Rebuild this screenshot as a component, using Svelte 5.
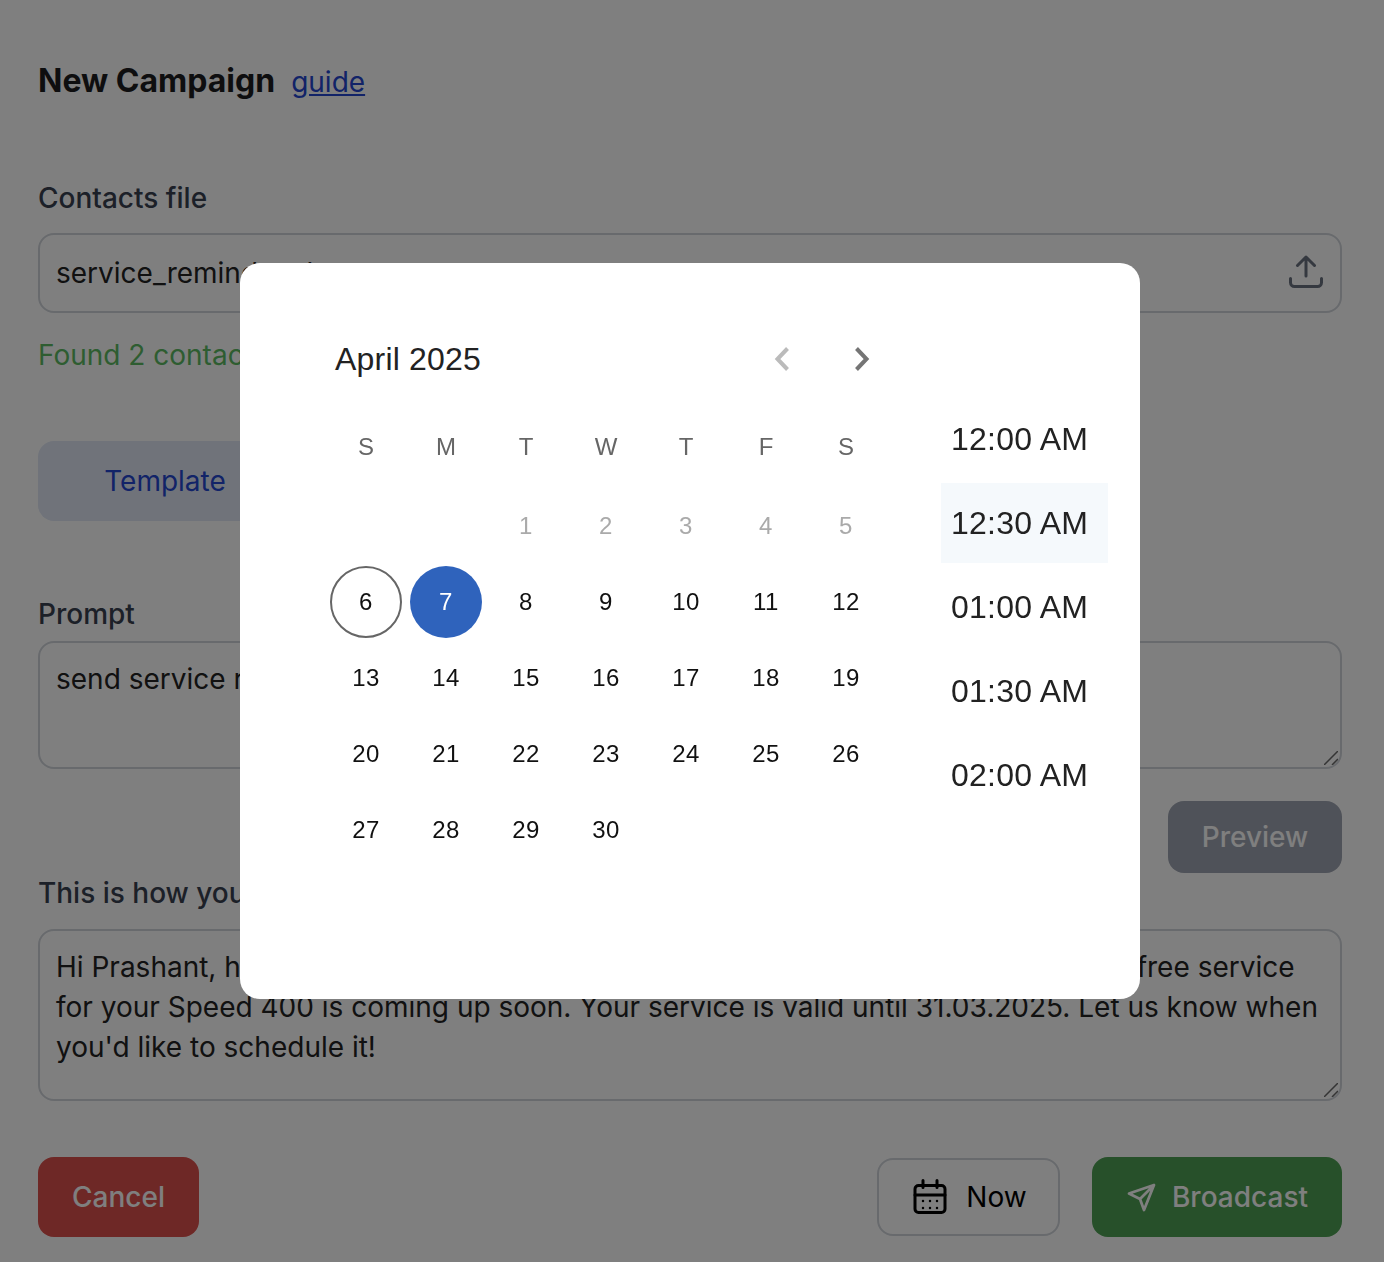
<script>
	const weekdays = ['S', 'M', 'T', 'W', 'T', 'F', 'S'];
	const blanks = [0, 1];
	const days = Array.from({ length: 30 }, (_, i) => i + 1);
	const times = ['12:00 AM', '12:30 AM', '01:00 AM', '01:30 AM', '02:00 AM'];
	const prompt = 'send service reminders to my customers';
	const preview =
		"Hi Prashant, hope you are doing well and enjoying your bike! Your complimentary free service for your Speed 400 is coming up soon. Your service is valid until 31.03.2025. Let us know when you'd like to schedule it!";
</script>

<div class="page">
	<header class="title-row">
		<h1>New Campaign</h1>
		<a href="#guide">guide</a>
	</header>

	<label class="label contacts-label" for="contacts">Contacts file</label>
	<div class="file-input" id="contacts">
		<span>service_reminder.xlsx</span>
		<svg width="36" height="36" viewBox="0 0 36 36" fill="none" stroke="#6b7280" stroke-width="3" stroke-linecap="round" stroke-linejoin="round">
			<path d="M18 21V2M9.500 10.500 18 2l8.500 8.500M2.500 23.500v4a4 4 0 0 0 4 4h23a4 4 0 0 0 4-4v-4" />
		</svg>
	</div>
	<p class="found">Found 2 contacts</p>

	<div class="tabs">
		<button class="tab">Template</button>
	</div>

	<label class="label prompt-label" for="prompt">Prompt</label>
	<div class="field">
		<textarea id="prompt" class="prompt" value={prompt}></textarea>
		<svg class="grip" width="14" height="14" viewBox="0 0 14 14" fill="none" stroke="#6a6a6a" stroke-width="1.500">
			<path d="M0 14 14 0M8 14l6-6" />
		</svg>
	</div>
	<div class="preview-row">
		<button class="btn preview-btn">Preview</button>
	</div>

	<label class="label message-label" for="message">This is how your message will look</label>
	<div class="field">
		<textarea id="message" class="message" value={preview}></textarea>
		<svg class="grip" width="14" height="14" viewBox="0 0 14 14" fill="none" stroke="#6a6a6a" stroke-width="1.500">
			<path d="M0 14 14 0M8 14l6-6" />
		</svg>
	</div>

	<footer class="actions">
		<button class="btn cancel">Cancel</button>
		<div class="actions-right">
			<button class="now">
				<svg width="36" height="36" viewBox="0 0 36 36" fill="none" stroke="#000" stroke-width="3" stroke-linecap="round" stroke-linejoin="round">
					<rect x="3" y="6.500" width="30" height="27" rx="3.500" />
					<path d="M3 16h30M11 1.500v7M25 1.500v7" />
					<path d="M11 22h.01M18 22h.01M25 22h.01M11 29h.01M18 29h.01M25 29h.01" stroke-width="2.500" />
				</svg>
				Now
			</button>
			<button class="btn broadcast">
				<svg width="30" height="30" viewBox="0 0 30 30" fill="none" stroke="#fff" stroke-width="2.750" stroke-linecap="round" stroke-linejoin="round">
					<path d="M28 3 3 11.500 14 17l4 11L28 3ZM14 17 28 3" />
				</svg>
				Broadcast
			</button>
		</div>
	</footer>
</div>

<div class="backdrop">
	<div class="modal">
		<div class="calendar">
			<div class="month-row">
				<span class="month">April 2025</span>
				<div class="arrows">
					<svg width="18" height="26" viewBox="0 0 18 26" fill="none" stroke="#bbb" stroke-width="4">
						<path d="M14.500 2.500 4.500 13l10 10.500" />
					</svg>
					<svg width="18" height="26" viewBox="0 0 18 26" fill="none" stroke="#757575" stroke-width="4">
						<path d="m3.500 2.500 10 10.500-10 10.500" />
					</svg>
				</div>
			</div>
			<div class="grid weekdays">
				{#each weekdays as day}
					<span>{day}</span>
				{/each}
			</div>
			<div class="grid days">
				{#each blanks as blank}
					<span class="day" data-blank={blank}></span>
				{/each}
				{#each days as day}
					<span class="day" class:past={day < 6} class:today={day === 6} class:selected={day === 7}>{day}</span>
				{/each}
			</div>
		</div>
		<ul class="times">
			{#each times as time, i}
				<li class:hover={i === 1}>{time}</li>
			{/each}
		</ul>
	</div>
</div>

<style>
	:global(body) {
		background: #fff;
		font-family: Inter, 'Liberation Sans', sans-serif;
		color: #111;
	}

	.page {
		box-sizing: border-box;
		height: 1262px;
		padding: 60px 42px 0 38px;
		overflow: hidden;
		font-size: 28px;
		line-height: 40px;
	}

	.title-row {
		display: flex;
		align-items: baseline;
		gap: 16px;
		height: 42px;
		margin-bottom: 76px;
	}

	h1 {
		margin: 0;
		font-size: 32px;
		font-weight: 700;
		line-height: 42px;
		color: #1c1c1e;
	}

	.title-row a {
		color: #2547d0;
	}

	.label {
		display: block;
		font-weight: 500;
		color: #394150;
		height: 36px;
		line-height: 40px;
	}

	.contacts-label {
		margin-bottom: 19px;
	}

	.file-input {
		box-sizing: border-box;
		display: flex;
		align-items: center;
		justify-content: space-between;
		height: 80px;
		padding: 0 16px;
		border: 2px solid #d1d5db;
		border-radius: 16px;
		color: #222;
	}

	.found {
		margin: 22px 0 0;
		color: #5dbb63;
	}

	.tabs {
		display: flex;
		margin-top: 66px;
	}

	.tab {
		width: 254px;
		height: 80px;
		padding: 0;
		border: 0;
		border-radius: 16px 0 0 16px;
		background: #e0e7f5;
		font: inherit;
		color: #2547d0;
	}

	.prompt-label {
		margin-top: 73px;
		margin-bottom: 11px;
	}

	.message-label {
		margin-bottom: 20px;
	}

	.field {
		position: relative;
	}

	.grip {
		position: absolute;
		right: 4px;
		bottom: 4px;
	}

	textarea {
		display: block;
		box-sizing: border-box;
		width: 100%;
		margin: 0;
		padding: 16px 16px;
		border: 2px solid #d1d5db;
		border-radius: 16px;
		background: #fff;
		font: inherit;
		color: #222;
		outline: none;
		resize: none;
	}

	.prompt {
		height: 128px;
	}

	.preview-row {
		display: flex;
		justify-content: flex-end;
		margin-top: 32px;
	}

	.btn {
		display: inline-flex;
		align-items: center;
		justify-content: center;
		height: 80px;
		border: 0;
		border-radius: 16px;
		font: inherit;
		font-weight: 500;
		color: #fff;
	}

	.preview-btn {
		width: 174px;
		height: 72px;
		background: #9fa5b2;
	}

	.message {
		height: 172px;
	}

	.actions {
		display: flex;
		align-items: center;
		justify-content: space-between;
		margin-top: 56px;
	}

	.actions-right {
		display: flex;
		align-items: center;
		gap: 32px;
	}

	.cancel {
		width: 161px;
		background: #dc504c;
	}

	.now {
		display: inline-flex;
		align-items: center;
		justify-content: center;
		gap: 18px;
		box-sizing: border-box;
		width: 183px;
		height: 78px;
		padding: 0 0 0 2px;
		border: 2px solid #d1d5db;
		border-radius: 16px;
		background: #fff;
		font: inherit;
		color: #000;
	}

	.broadcast {
		gap: 16px;
		width: 250px;
		background: #4ea054;
	}

	.backdrop {
		position: fixed;
		inset: 0;
		display: flex;
		align-items: center;
		justify-content: center;
		padding-right: 4px;
		background: rgba(0, 0, 0, 0.5);
	}

	.modal {
		box-sizing: border-box;
		display: flex;
		width: 900px;
		height: 736px;
		padding: 64px 32px 0 86px;
		border-radius: 20px;
		background: #fff;
		font-family: 'Liberation Sans', Arial, sans-serif;
		color: #222;
	}

	.calendar {
		width: 560px;
	}

	.month-row {
		display: flex;
		align-items: center;
		justify-content: space-between;
		height: 64px;
		padding-left: 9px;
		padding-right: 15px;
	}

	.month {
		font-size: 32px;
		letter-spacing: 0.2px;
	}

	.arrows {
		display: flex;
		gap: 62px;
	}

	.grid {
		display: grid;
		grid-template-columns: repeat(7, 80px);
		text-align: center;
		font-size: 24px;
	}

	.weekdays {
		margin-top: 14px;
		height: 83px;
		align-items: center;
		color: #666;
	}

	.days {
		grid-auto-rows: 76px;
		letter-spacing: 0.5px;
	}

	.day {
		box-sizing: border-box;
		justify-self: center;
		align-self: center;
		width: 72px;
		height: 72px;
		line-height: 72px;
		border-radius: 50%;
		color: #111;
	}

	.day.past {
		color: #aaa;
	}

	.day.today {
		border: 2px solid #666;
		line-height: 68px;
	}

	.day.selected {
		background: #2f63bc;
		color: #fff;
	}

	.times {
		list-style: none;
		width: 167px;
		margin: 72px 0 0 55px;
		padding: 0;
		font-size: 32px;
		letter-spacing: 0.25px;
	}

	.times li {
		height: 80px;
		margin-bottom: 4px;
		padding-left: 10px;
		line-height: 80px;
		white-space: nowrap;
	}

	.times li.hover {
		background: #f5f9fc;
	}
</style>
